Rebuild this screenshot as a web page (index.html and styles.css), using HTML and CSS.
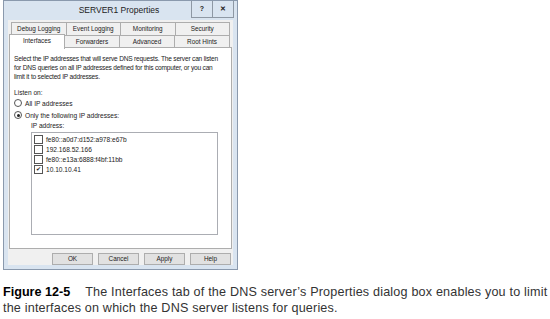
FILE: index.html
```html
<!DOCTYPE html>
<html lang="en">
<head>
  <meta charset="UTF-8">
  <title>SERVER1 Properties</title>
  <link rel="stylesheet" href="styles.css">
</head>
<body>

  <!-- Ventana de propiedades -->
  <div class="dialog">
    <div class="titlebar">
      <span class="title">SERVER1 Properties</span>
      <div class="caption-btns">
        <span class="cap-btn">?</span>
        <span class="cap-btn close">&#x2715;</span>
      </div>
    </div>

    <div class="client">
      <div class="tabs">
        <div class="tab-row back">
          <span class="tab">Debug Logging</span>
          <span class="tab">Event Logging</span>
          <span class="tab">Monitoring</span>
          <span class="tab">Security</span>
        </div>
        <div class="tab-row front">
          <span class="tab selected">Interfaces</span>
          <span class="tab">Forwarders</span>
          <span class="tab">Advanced</span>
          <span class="tab">Root Hints</span>
        </div>
      </div>

      <div class="panel">
        <p class="intro">Select the IP addresses that will serve DNS requests. The server can listen<br>for DNS queries on all IP addresses defined for this computer, or you can<br>limit it to selected IP addresses.</p>
        <p class="label">Listen on:</p>
        <div class="radio-row"><span class="radio"></span>All IP addresses</div>
        <div class="radio-row"><span class="radio on"></span>Only the following IP addresses:</div>

        <div class="ip-section">
          <p class="label">IP address:</p>
          <ul class="ip-list">
            <li><span class="check"></span>fe80::a0d7:d152:a978:e67b</li>
            <li><span class="check"></span>192.168.52.166</li>
            <li><span class="check"></span>fe80::e13a:6888:f4bf:11bb</li>
            <li><span class="check on">&#x2714;</span>10.10.10.41</li>
          </ul>
        </div>
      </div>

      <div class="buttons">
        <span class="btn">OK</span>
        <span class="btn">Cancel</span>
        <span class="btn">Apply</span>
        <span class="btn">Help</span>
      </div>
    </div>
  </div>

  <!-- Pie de figura -->
  <div class="caption">
    <p class="line"><b>Figure 12-5</b><span class="txt">The Interfaces tab of the DNS server&rsquo;s Properties dialog box enables you to limit</span></p>
    <p class="line"><span class="txt">the interfaces on which the DNS server listens for queries.</span></p>
  </div>

</body>
</html>
```

FILE: styles.css
```css
/* ====== RESET ====== */
html, body {
  margin: 0;
  padding: 0;
}

body {
  background: #ffffff;
  font-family: 'Liberation Sans', Arial, sans-serif;
  color: #1a1a1a;
}

p, ul {
  margin: 0;
  padding: 0;
}

/* ====== VENTANA ====== */
.dialog {
  width: 233px;
  height: 268px;
  margin-left: 3px;
  border: 1px solid #8a99ad;
  background: #d9e4f0;
  display: flex;
  flex-direction: column;
}

.titlebar {
  height: 19px;
  flex: none;
  position: relative;
}
.title {
  display: block;
  text-align: center;
  font-size: 8.5px;
  line-height: 19px;
  color: #222;
  padding-right: 3px;
}
.caption-btns {
  position: absolute;
  right: 3px;
  top: 0;
  display: flex;
}
.cap-btn {
  width: 20px;
  height: 16px;
  border: 1px solid #8e98a4;
  border-top: none;
  font-size: 7px;
  font-weight: bold;
  line-height: 15px;
  text-align: center;
  color: #222;
}
.cap-btn + .cap-btn {
  border-left: none;
}

.client {
  flex: 1;
  margin: 0 4px 4px 4px;
  background: #f0f0f0;
  display: flex;
  flex-direction: column;
}

/* ====== PESTAÑAS ====== */
.tabs {
  margin-top: 2px;
  font-size: 6.4px;
  color: #222;
}
.tab-row {
  display: flex;
  height: 13px;
}
.tab-row.back {
  margin-left: 3px;
  margin-right: 3px;
}
.tab-row.front {
  margin-left: 1px;
  margin-right: 3px;
}
.tab {
  flex: 1;
  text-align: center;
  line-height: 12px;
  border: 1px solid #adadad;
  border-bottom: none;
  margin-left: -1px;
  background: #f0f0f0;
}
.tab:first-child {
  margin-left: 0;
}
.tab.selected {
  background: #ffffff;
  flex: 0 0 54px;
  height: 14px;
  margin-top: -1px;
  position: relative;
  z-index: 1;
}

/* ====== PANEL BLANCO ====== */
.panel {
  height: 194px;
  margin: -1px 1px 0 1px;
  background: #ffffff;
  border: 1px solid #adadad;
  padding: 6px 1px 0 4px;
  font-size: 6.6px;
  line-height: 9px;
  color: #222;
}
.intro {
  margin-bottom: 8px;
  white-space: nowrap;
  letter-spacing: -0.2px;
}
.label {
  line-height: 8px;
}
.panel > .label {
  margin-top: 1px;
}
.radio-row {
  display: flex;
  align-items: center;
  height: 12px;
}
.radio {
  width: 6px;
  height: 6px;
  border: 1px solid #555;
  border-radius: 50%;
  margin-right: 3px;
  display: flex;
  align-items: center;
  justify-content: center;
  box-sizing: content-box;
}
.radio.on::after {
  content: '';
  width: 3px;
  height: 3px;
  border-radius: 50%;
  background: #222;
}

.ip-section {
  margin: 1px 0 0 17px;
}
.ip-section .label {
  margin-bottom: 2px;
}
.ip-list {
  list-style: none;
  width: 185px;
  height: 100px;
  border: 1px solid #abadb3;
  padding-top: 1px;
}
.ip-list li {
  display: flex;
  align-items: center;
  height: 10px;
  padding-left: 2px;
}
.check {
  width: 7px;
  height: 7px;
  border: 1px solid #555;
  background: #fff;
  margin-right: 3px;
  font-size: 6px;
  line-height: 7px;
  text-align: center;
  color: #222;
}

/* ====== BOTONES ====== */
.buttons {
  display: flex;
  justify-content: flex-end;
  gap: 5px;
  padding: 4px 2px 0 0;
}
.btn {
  width: 39px;
  height: 10px;
  border: 1px solid #adadad;
  background: #e1e1e1;
  font-size: 6.4px;
  line-height: 10px;
  text-align: center;
  color: #222;
}

/* ====== PIE DE FIGURA ====== */
.caption {
  margin: 14px 0 0 3px;
  font-family: 'Liberation Sans', Arial, sans-serif;
  font-size: 12.6px;
  line-height: 16px;
  color: #333;
}
.line {
  white-space: nowrap;
}
.line b {
  color: #000;
  margin-right: 15px;
}
.txt {
  letter-spacing: 0.18px;
}
```
